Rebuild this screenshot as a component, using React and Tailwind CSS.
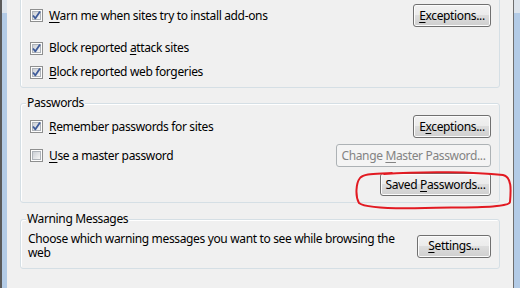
import React from 'react';

function Key({ children }) {
    return <span className="underline underline-offset-2">{children}</span>;
}

function CheckBox({ checked }) {
    return (
        <span className="flex h-[13px] w-[13px] shrink-0 items-center justify-center border border-[#8e8f8f] bg-[#f4f4f4] shadow-[inset_0_0_0_1px_#fdfdfd]">
            <span className="flex h-[9px] w-[9px] items-center justify-center border border-[#aeb3b9] bg-[linear-gradient(135deg,#cbcfd5,#f6f6f6)]">
                {checked && (
                    <svg width="9" height="9" viewBox="0 0 9 9" className="overflow-visible">
                        <path d="M1 4.5 L3.4 7.3 L8 0.6" fill="none" stroke="#3f5c9a" strokeWidth="1.8" strokeLinejoin="round" />
                    </svg>
                )}
            </span>
        </span>
    );
}

function Button({ children, width, disabled }) {
    const look = disabled
        ? 'border-[#adb2b5] bg-[#f4f4f4] text-[#838383]'
        : 'border-[#707070] bg-[linear-gradient(#f2f2f2,#ebebeb_50%,#dddddd_50%,#cfcfcf)] text-black shadow-[inset_0_0_0_1px_#fcfcfc]';
    return (
        <div className={`flex h-[23px] shrink-0 items-center justify-center rounded-[3px] border ${look} ${width}`}>
            <span>{children}</span>
        </div>
    );
}

function CheckRow({ checked, children, height = 'h-[23px]', button }) {
    return (
        <div className={`flex items-center ${height}`}>
            <CheckBox checked={checked} />
            <span className="ml-[6px] flex-1">{children}</span>
            {button}
        </div>
    );
}

function GroupBox({ title, className, children }) {
    return (
        <div className={`relative rounded-[3px] border border-[#d5dfe5] shadow-[inset_1px_1px_0_#fff] ${className}`}>
            {title && (
                <span className="absolute left-[5px] top-[-9px] bg-[#f0f0f0] px-[1px] leading-[16px]">{title}</span>
            )}
            {children}
        </div>
    );
}

export default function App() {
    return (
        <div className="relative flex h-[288px] w-[520px] overflow-hidden bg-[#f0f0f0] font-['Noto_Sans',sans-serif] text-[12px] leading-[16px] tracking-[-0.35px] text-black">
            <div className="w-[2px] bg-[#5a5a5a]" />
            <div className="flex w-[5px] flex-col">
                <div className="h-[13px] bg-[#dde4ec]" />
                <div className="flex-1 bg-[#b3cbe6]" />
            </div>

            <main className="flex flex-1 flex-col pl-[13px] pr-[13px]">
                <GroupBox className="mt-[-8px] pl-[9px] pr-[8px] pt-[11px] pb-[3px]">
                    <CheckRow checked button={<Button width="w-[78px]"><Key>E</Key>xceptions...</Button>}>
                        <Key>W</Key>arn me when sites try to install add-ons
                    </CheckRow>
                    <div className="mt-[9px]">
                        <CheckRow checked height="h-[24px]">
                            Block reported <Key>a</Key>ttack sites
                        </CheckRow>
                        <CheckRow checked height="h-[24px]">
                            <Key>B</Key>lock reported web forgeries
                        </CheckRow>
                    </div>
                </GroupBox>

                <GroupBox title="Passwords" className="mt-[15px] flex flex-col gap-[6px] pl-[9px] pr-[8px] pt-[11px] pb-[6px]">
                    <CheckRow checked button={<Button width="w-[78px]">E<Key>x</Key>ceptions...</Button>}>
                        <Key>R</Key>emember passwords for sites
                    </CheckRow>
                    <CheckRow button={<Button disabled width="w-[155px]">Change <Key>M</Key>aster Password...</Button>}>
                        <Key>U</Key>se a master password
                    </CheckRow>
                    <div className="flex justify-end">
                        <Button width="w-[111px]">Saved <Key>P</Key>asswords...</Button>
                    </div>
                </GroupBox>

                <GroupBox title="Warning Messages" className="mt-[16px] flex items-center pl-[7px] pr-[8px] pt-[12px] pb-[8px]">
                    <p className="flex-1 pr-[14px] leading-[14px]">
                        Choose which warning messages you want to see while browsing the web
                    </p>
                    <Button width="w-[74px]"><Key>S</Key>ettings...</Button>
                </GroupBox>
            </main>

            <div className="w-px bg-[#6e6e6e]" />
            <div className="flex w-[6px] flex-col">
                <div className="h-[13px] bg-[#dde4ec]" />
                <div className="flex-1 bg-[#b3cbe6]" />
            </div>

            <svg className="pointer-events-none absolute left-0 top-0" width="520" height="288" viewBox="0 0 520 288">
                <path
                    d="M384 174 C 425 171, 475 172, 503 175 C 512 177, 511 190, 510 202 C 509 208, 470 207, 425 208 C 385 209, 364 207, 359 203 C 355 196, 356 183, 360 178 C 364 173, 376 174, 392 173"
                    fill="none"
                    stroke="#e21a22"
                    strokeWidth="2"
                    strokeLinecap="round"
                />
            </svg>
        </div>
    );
}
